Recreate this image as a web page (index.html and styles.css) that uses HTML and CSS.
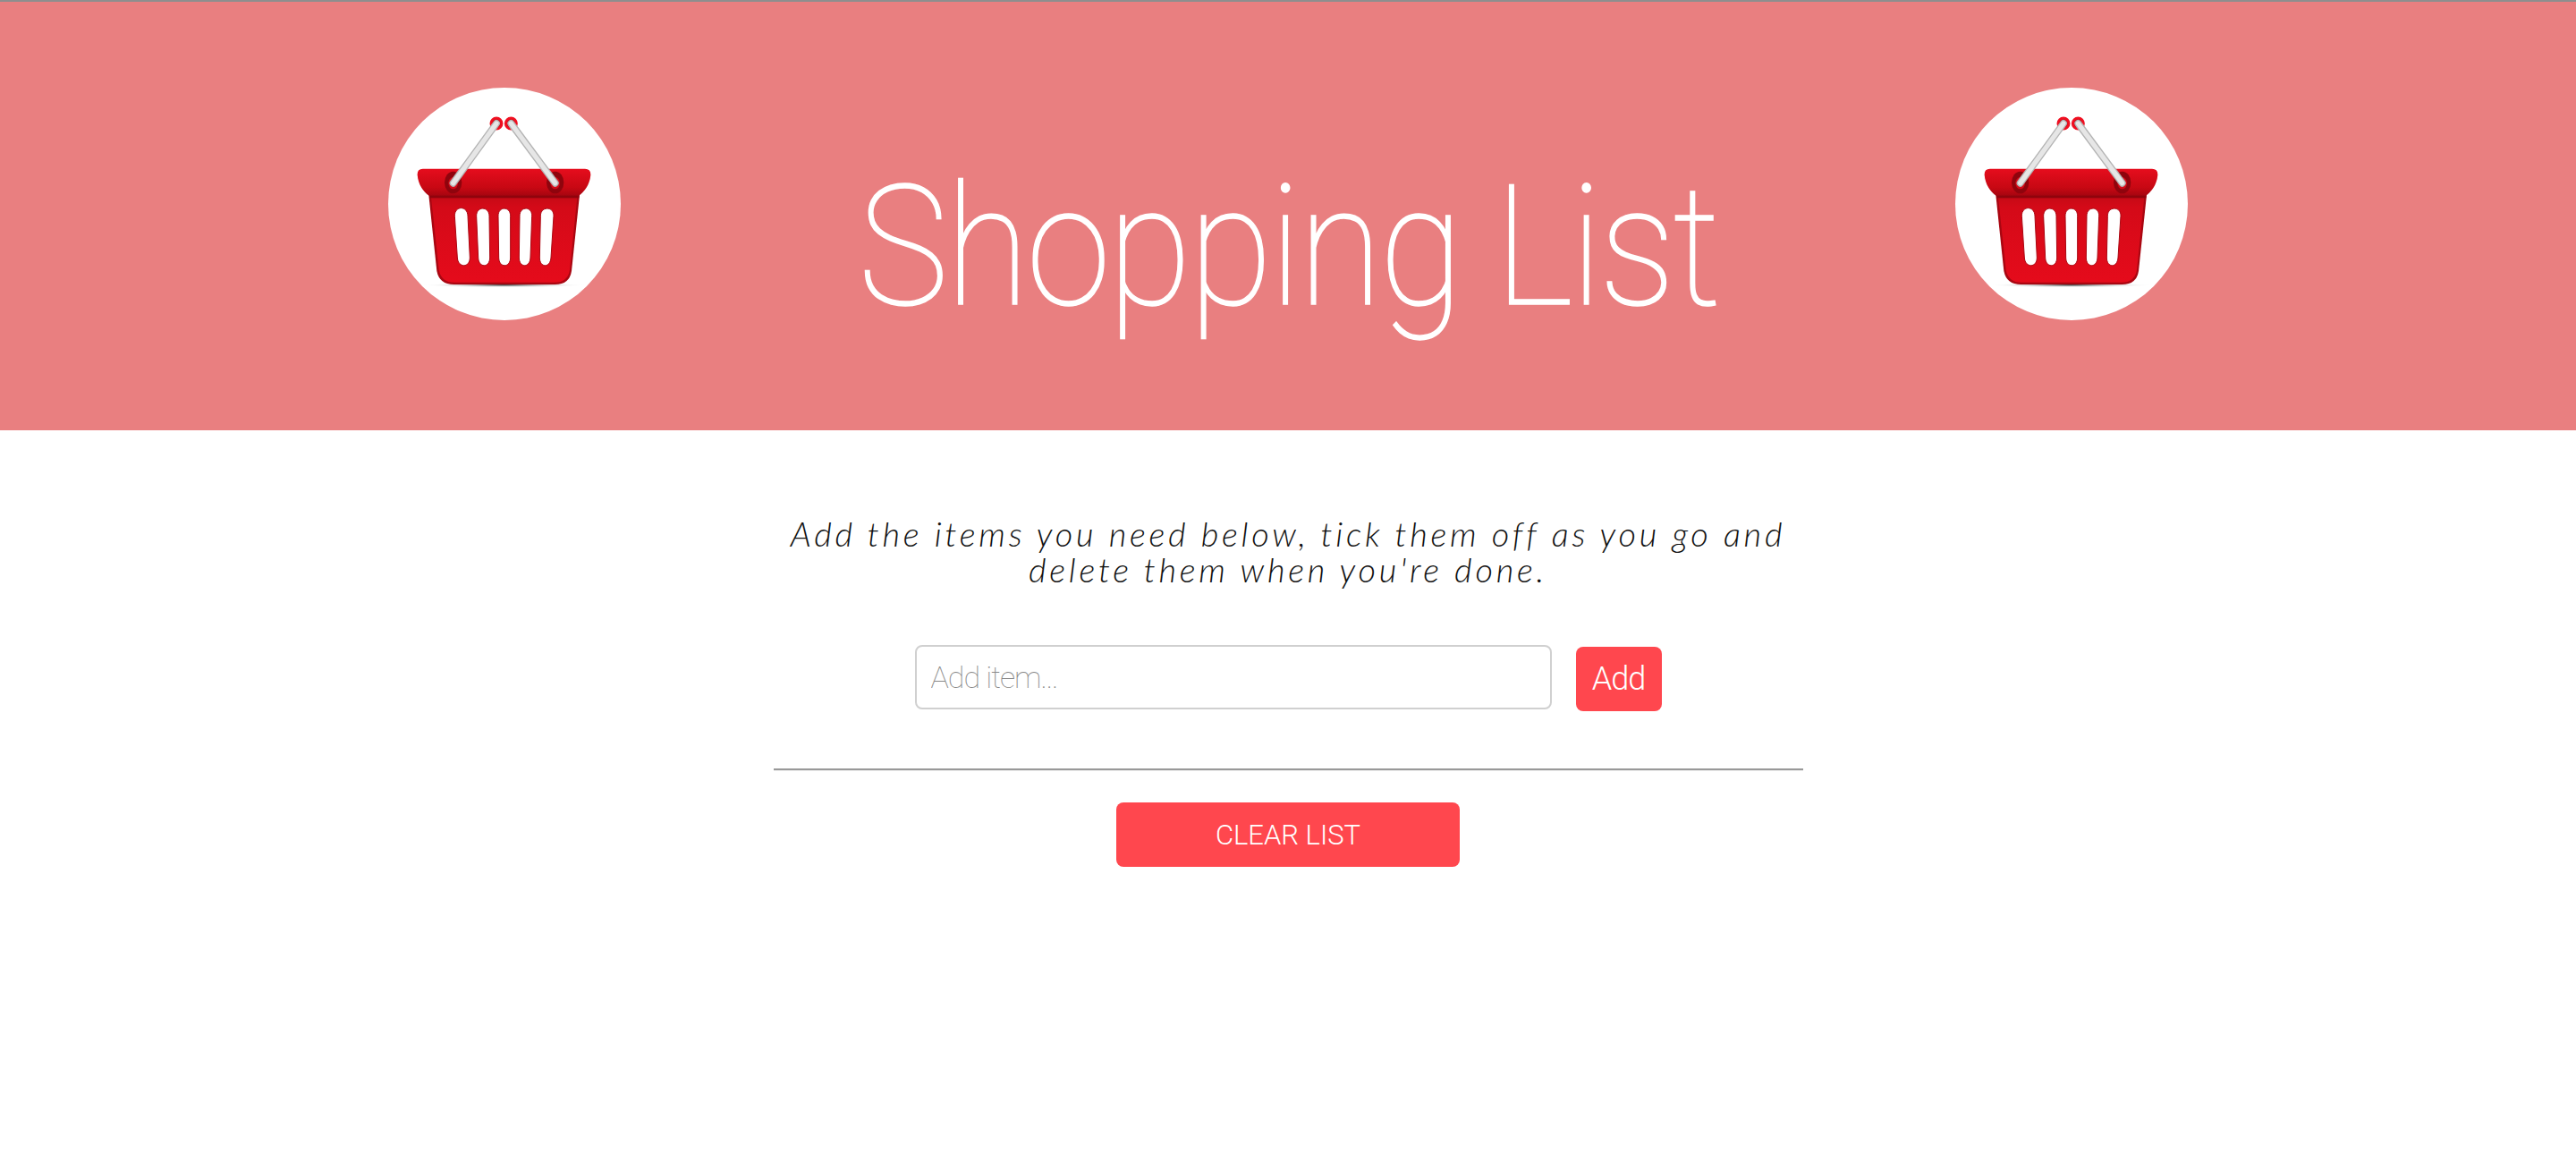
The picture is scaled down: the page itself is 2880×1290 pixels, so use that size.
FILE: index.html
```html
<!DOCTYPE html>
<html>
<head>
    <title>Shopping List</title>
    <link rel="stylesheet" href="styles.css">
</head>
<body>
    <svg class="defs" width="0" height="0">
        <defs>
            <linearGradient id="rimFill" x1="0" y1="0" x2="0" y2="1">
                <stop offset="0" stop-color="#e60d1d"/>
                <stop offset="0.7" stop-color="#c70813"/>
                <stop offset="1" stop-color="#a50510"/>
            </linearGradient>
            <linearGradient id="bodyFill" x1="0" y1="0" x2="0" y2="1">
                <stop offset="0" stop-color="#c70a16"/>
                <stop offset="0.12" stop-color="#d40a18"/>
                <stop offset="1" stop-color="#e50b1b"/>
            </linearGradient>
            <radialGradient id="floorShadow">
                <stop offset="0" stop-color="#333"/>
                <stop offset="1" stop-color="#fff" stop-opacity="0"/>
            </radialGradient>
            <symbol id="basket" viewBox="102 85 780 780">
                <circle cx="492" cy="475" r="390" fill="#fff"/>
                <ellipse cx="490" cy="747" rx="275" ry="8" fill="url(#floorShadow)"/>
                <!-- body -->
                <path d="M238 445H744L717 700Q710 745 662 745H322Q274 745 265 700Z" fill="#a90611"/>
                <path d="M246 452H736L711 696Q704 738 660 738H324Q280 738 272 696Z" fill="url(#bodyFill)"/>
                <!-- slots -->
                <g fill="#fff" stroke="#a90611" stroke-width="3">
                    <path d="M325 515C325 480 368 480 369 515L376 655C376 690 336 690 334 655Z"/>
                    <path d="M398 515C398 482 440 482 441 515L443 655C443 690 405 690 404 655Z"/>
                    <path d="M471 515C471 482 512 482 512 515V655C512 690 473 690 473 655Z"/>
                    <path d="M543 515C543 482 585 482 584 515L579 655C578 690 541 690 541 655Z"/>
                    <path d="M613 515C613 482 658 482 657 515L648 655C646 690 610 690 610 655Z"/>
                </g>
                <!-- rim -->
                <path d="M218 357H762Q782 357 781 378C778 410 760 435 740 448H240C220 435 203 410 200 378Q199 357 218 357Z" fill="url(#rimFill)"/>
                <rect x="240" y="447" width="502" height="8" fill="#8f040d"/>
                <!-- eyelets -->
                <ellipse cx="320" cy="403" rx="29" ry="37" fill="#8f040d"/>
                <ellipse cx="662" cy="403" rx="29" ry="37" fill="#8f040d"/>
                <ellipse cx="320" cy="405" rx="16" ry="20" fill="#d40a18"/>
                <ellipse cx="662" cy="405" rx="16" ry="20" fill="#d40a18"/>
                <!-- rings at the top of the handles -->
                <circle cx="465" cy="205" r="18" fill="#b50610" stroke="#f00f20" stroke-width="9"/>
                <circle cx="514" cy="205" r="18" fill="#b50610" stroke="#f00f20" stroke-width="9"/>
                <!-- handles -->
                <path d="M320 405L465 205M662 405L514 205" fill="none" stroke="#b4b4b4" stroke-width="24" stroke-linecap="round"/>
                <path d="M320 405L465 205M662 405L514 205" fill="none" stroke="#e6e6e6" stroke-width="16" stroke-linecap="round"/>
            </symbol>
        </defs>
    </svg>

    <header class="banner">
        <svg class="logo"><use href="#basket"/></svg>
        <h1 class="title">Shopping List</h1>
        <svg class="logo"><use href="#basket"/></svg>
    </header>

    <main class="container">
        <p class="intro">Add the items you need below, tick them off as you go and<br>delete them when you're done.</p>
        <form class="add-form">
            <input class="add-input" type="text" placeholder="Add item...">
            <button class="add-button" type="button">Add</button>
        </form>
        <hr class="divider">
        <button class="clear-button" type="button">CLEAR LIST</button>
    </main>
</body>
</html>
```

FILE: styles.css
```css
body {
    margin: 0;
    background: #fff;
    font-family: Roboto, "Open Sans", sans-serif;
    font-weight: 100;
}

.defs {
    display: block;
    height: 0;
}

.banner {
    border-top: 2px solid #8e8e8e;
    padding: 96px 434px 0;
    height: 383px;
    display: flex;
    justify-content: space-between;
    align-items: flex-start;
    background: #e97f80;
}

.logo {
    width: 260px;
    height: 260px;
}

.title {
    margin: 69px 0 0;
    font-size: 187px;
    font-weight: 100;
    line-height: 220px;
    letter-spacing: -3px;
    -webkit-text-stroke: 1.5px #fff;
    transform: scaleX(0.91);
    color: #fff;
}

.container {
    width: 1151px;
    margin: 0 auto;
    display: flex;
    flex-direction: column;
    align-items: center;
}

.intro {
    margin: 95px 0 0;
    font-family: Lato, sans-serif;
    font-size: 38px;
    font-weight: 300;
    line-height: 40px;
    font-style: italic;
    letter-spacing: 3.75px;
    text-align: center;
    color: #111;
}

.add-form {
    margin-top: 65px;
    display: flex;
    align-items: flex-start;
    gap: 27px;
}

.add-input {
    width: 712px;
    height: 72px;
    box-sizing: border-box;
    padding: 0 16px;
    border: 2px solid #d0d0d0;
    border-radius: 8px;
    font-family: inherit;
    font-weight: 100;
    font-size: 34px;
    letter-spacing: -1px;
    outline: none;
}

.add-input::placeholder {
    color: #888;
}

.add-button {
    width: 96px;
    height: 72px;
    margin-top: 2px;
    border: none;
    border-radius: 8px;
    background: #ff474e;
    color: #fff;
    font-family: inherit;
    font-weight: 300;
    font-size: 36px;
    letter-spacing: -1px;
}

.divider {
    width: 100%;
    height: 2px;
    margin: 64px 0 0;
    border: none;
    border-bottom: 1px solid #eee;
    background: #999;
    box-sizing: content-box;
}

.clear-button {
    width: 384px;
    height: 72px;
    margin-top: 35px;
    border: none;
    border-radius: 8px;
    background: #ff474e;
    color: #fff;
    font-family: inherit;
    font-weight: 300;
    font-size: 31px;
}
```
